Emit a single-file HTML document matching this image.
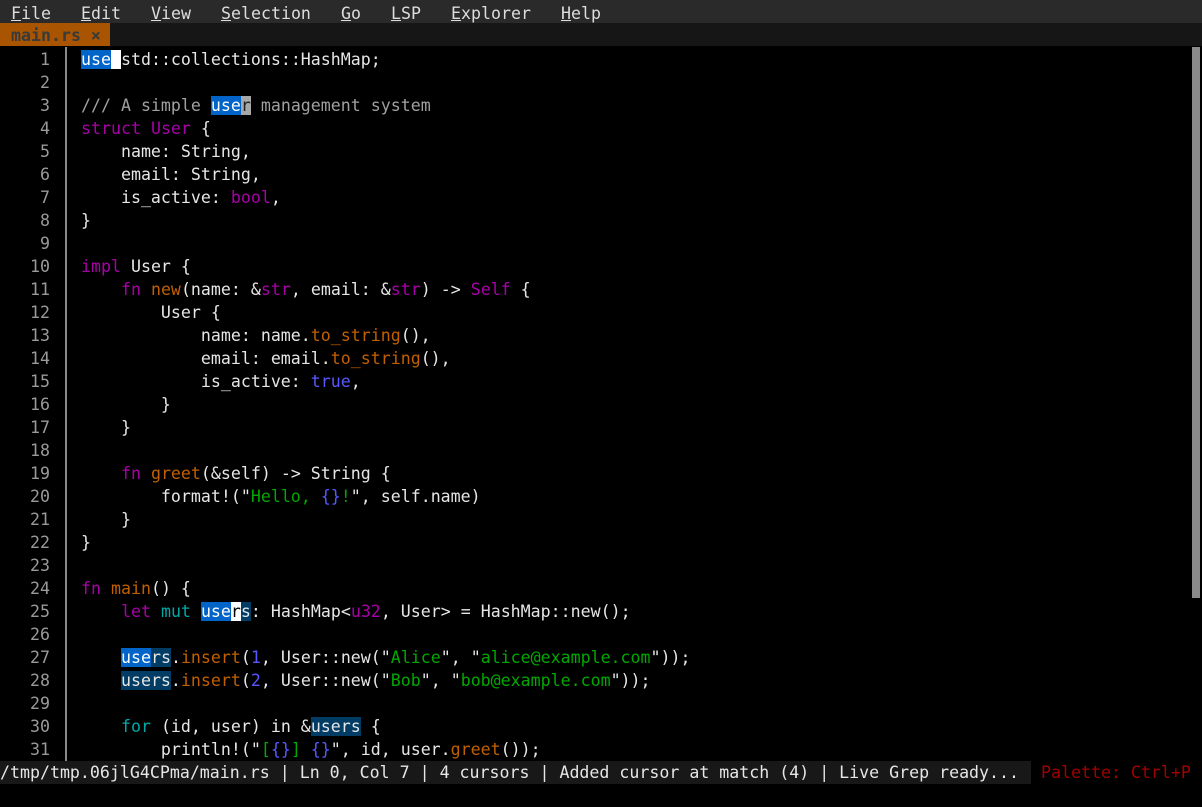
<!DOCTYPE html>
<html><head><meta charset="utf-8"><style>
body{margin:0;width:1202px;height:807px;background:#000;overflow:hidden;font-family:"DejaVu Sans Mono","Liberation Mono",monospace;font-size:16.6px;color:#e6e6e6;position:relative}
.row{position:absolute;left:0;height:23px;line-height:23px;white-space:pre}
#menu{top:0;width:1202px;background:#2a2a2a;color:#ddd}
#menu span{position:absolute;top:2px}
#tab{top:23px;width:1202px;background:#161616}
#tab .t{position:absolute;left:0;width:110px;height:23px;background:#a85400;color:#3a3a3a;padding-left:11px;box-sizing:border-box;font-weight:bold;line-height:25px}
.ln{position:absolute;width:50px;text-align:right;color:#9a9a9a;height:23px;line-height:23px}
.code{position:absolute;left:81px;white-space:pre;height:23px;line-height:23px}
#gut{position:absolute;left:65px;top:47px;width:2px;height:714px;background:#8a8a8a}
#sb{position:absolute;left:1192px;top:47px;width:8px;height:551px;background:#8a8a8a}
#status{position:absolute;top:761px;left:0;width:1031px;height:23px;line-height:23px;background:#181818;color:#e6e6e6;white-space:pre}
#pal{position:absolute;top:761px;left:1041px;height:23px;line-height:23px;color:#a00000;white-space:pre}
.k{color:#a800a8}.t2{color:#00a8a8}.f{color:#c06000}.c{color:#a0a0a0}.s{color:#00a800}.n{color:#5858ff}
.hb{background:#0064c8;color:#fff}.hd{background:#003c64}.cw{background:#fff;color:#000}.cg{background:#a8a8a8;color:#222}
u{text-decoration:underline}
</style></head><body>
<div class="row" id="menu"><span style="left:11px"><u>F</u>ile</span><span style="left:81px"><u>E</u>dit</span><span style="left:151px"><u>V</u>iew</span><span style="left:221px"><u>S</u>election</span><span style="left:341px"><u>G</u>o</span><span style="left:391px"><u>L</u>SP</span><span style="left:451px"><u>E</u>xplorer</span><span style="left:561px"><u>H</u>elp</span></div>
<div class="row" id="tab"><div class="t">main.rs ×</div></div>
<div id="gut"></div><div id="sb"></div>
<div id="status">/tmp/tmp.06jlG4CPma/main.rs | Ln 0, Col 7 | 4 cursors | Added cursor at match (4) | Live Grep ready... </div>
<div id="pal">Palette: Ctrl+P</div>
<div style="position:absolute;top:48px;left:0">
<div class="ln" style="top:0">1</div><div class="code" style="top:0"><span class="hb">use</span><span class="cw"> </span>std::collections::HashMap;</div>
<div class="ln" style="top:23px">2</div>
<div class="ln" style="top:46px">3</div><div class="code c" style="top:46px">/// A simple <span class="hb">use</span><span class="cg">r</span> management system</div>
<div class="ln" style="top:69px">4</div><div class="code" style="top:69px"><span class="k">struct</span> <span class="k">User</span> {</div>
<div class="ln" style="top:92px">5</div><div class="code" style="top:92px">    name: String,</div>
<div class="ln" style="top:115px">6</div><div class="code" style="top:115px">    email: String,</div>
<div class="ln" style="top:138px">7</div><div class="code" style="top:138px">    is_active: <span class="k">bool</span>,</div>
<div class="ln" style="top:161px">8</div><div class="code" style="top:161px">}</div>
<div class="ln" style="top:184px">9</div>
<div class="ln" style="top:207px">10</div><div class="code" style="top:207px"><span class="k">impl</span> User {</div>
<div class="ln" style="top:230px">11</div><div class="code" style="top:230px">    <span class="k">fn</span> <span class="f">new</span>(name: &amp;<span class="k">str</span>, email: &amp;<span class="k">str</span>) -&gt; <span class="k">Self</span> {</div>
<div class="ln" style="top:253px">12</div><div class="code" style="top:253px">        User {</div>
<div class="ln" style="top:276px">13</div><div class="code" style="top:276px">            name: name.<span class="f">to_string</span>(),</div>
<div class="ln" style="top:299px">14</div><div class="code" style="top:299px">            email: email.<span class="f">to_string</span>(),</div>
<div class="ln" style="top:322px">15</div><div class="code" style="top:322px">            is_active: <span class="n">true</span>,</div>
<div class="ln" style="top:345px">16</div><div class="code" style="top:345px">        }</div>
<div class="ln" style="top:368px">17</div><div class="code" style="top:368px">    }</div>
<div class="ln" style="top:391px">18</div>
<div class="ln" style="top:414px">19</div><div class="code" style="top:414px">    <span class="k">fn</span> <span class="f">greet</span>(&amp;self) -&gt; String {</div>
<div class="ln" style="top:437px">20</div><div class="code" style="top:437px">        format!("<span class="s">Hello, </span><span class="n">{}</span><span class="s">!</span>", self.name)</div>
<div class="ln" style="top:460px">21</div><div class="code" style="top:460px">    }</div>
<div class="ln" style="top:483px">22</div><div class="code" style="top:483px">}</div>
<div class="ln" style="top:506px">23</div>
<div class="ln" style="top:529px">24</div><div class="code" style="top:529px"><span class="k">fn</span> <span class="f">main</span>() {</div>
<div class="ln" style="top:552px">25</div><div class="code" style="top:552px">    <span class="k">let</span> <span class="t2">mut</span> <span class="hb">use</span><span class="cw">r</span><span class="hd">s</span>: HashMap&lt;<span class="k">u32</span>, User&gt; = HashMap::new();</div>
<div class="ln" style="top:575px">26</div>
<div class="ln" style="top:598px">27</div><div class="code" style="top:598px">    <span class="hb">use</span><span class="hd">rs</span>.<span class="f">insert</span>(<span class="n">1</span>, User::new("<span class="s">Alice</span>", "<span class="s">alice@example.com</span>"));</div>
<div class="ln" style="top:621px">28</div><div class="code" style="top:621px">    <span class="hd">users</span>.<span class="f">insert</span>(<span class="n">2</span>, User::new("<span class="s">Bob</span>", "<span class="s">bob@example.com</span>"));</div>
<div class="ln" style="top:644px">29</div>
<div class="ln" style="top:667px">30</div><div class="code" style="top:667px">    <span class="t2">for</span> (id, user) in &amp;<span class="hd">users</span> {</div>
<div class="ln" style="top:690px">31</div><div class="code" style="top:690px">        println!("<span class="s">[</span><span class="n">{}</span><span class="s">] </span><span class="n">{}</span>", id, user.<span class="f">greet</span>());</div>
</div>
</body></html>
